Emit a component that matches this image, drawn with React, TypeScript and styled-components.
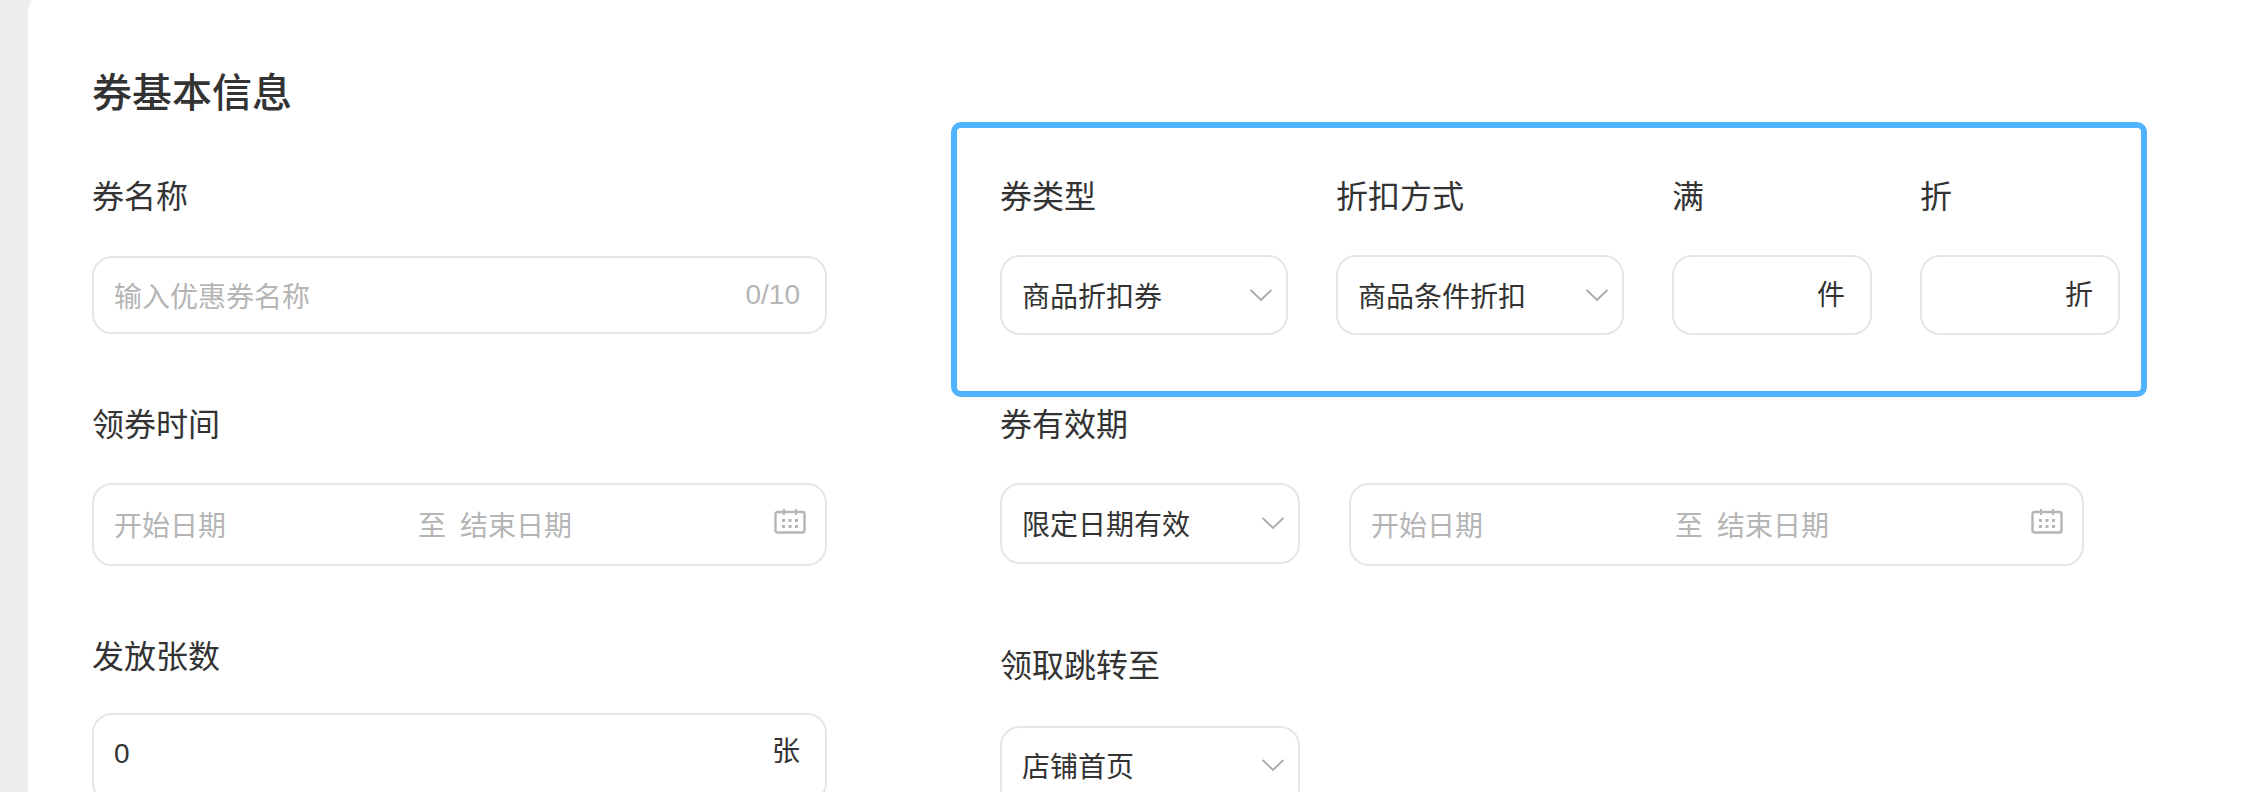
import styled, { createGlobalStyle } from 'styled-components';

const GlobalStyle = createGlobalStyle`
  html, body {
    margin: 0;
    padding: 0;
    height: 792px;
    overflow: hidden;
    background: #ededed;
  }
`;

const Page = styled.div`
  height: 792px;
  overflow: hidden;
  padding-left: 28px;
  font-family: "Liberation Sans", "Noto Sans CJK SC", sans-serif;
`;

const Card = styled.div`
  margin-top: -10px;
  height: 900px;
  padding: 73px 0 0 64px;
  box-sizing: border-box;
  background: #fff;
  border-radius: 24px 0 0 0;
`;

const Title = styled.h2`
  margin: 0;
  height: 56px;
  font-size: 40px;
  line-height: 60px;
  font-weight: 500;
  color: #333;
`;

const Columns = styled.div`
  display: flex;
  gap: 173px;
  align-items: flex-start;
`;

const LeftColumn = styled.div`
  width: 735px;
  padding-top: 57px;
`;

const RightColumn = styled.div`
  width: 1084px;
  padding-top: 3px;
`;

const Highlight = styled.div`
  display: grid;
  grid-template-columns: 288px 288px 200px 200px;
  column-gap: 48px;
  width: 1196px;
  height: 275px;
  margin-left: -49px;
  padding: 48px 0 0 43px;
  box-sizing: border-box;
  border: 6px solid #4fb3fd;
  border-radius: 10px;
`;

const Field = styled.div<{ $top?: number }>`
  margin-top: ${({ $top }) => $top ?? 0}px;
`;

const Label = styled.div<{ $gap: number }>`
  height: 40px;
  margin-bottom: ${({ $gap }) => $gap}px;
  font-size: 32px;
  line-height: 42px;
  color: #333;
`;

const Box = styled.div<{ $height: number; $width?: number; $right?: number; $raise?: number }>`
  display: flex;
  flex-shrink: 0;
  align-items: center;
  justify-content: space-between;
  width: ${({ $width }) => ($width ? `${$width}px` : '100%')};
  height: ${({ $height }) => $height}px;
  padding: 0 ${({ $right }) => $right ?? 14}px ${({ $raise }) => $raise ?? 0}px 20px;
  box-sizing: border-box;
  border: 2px solid #e6e6e6;
  border-radius: 20px;
  background: #fff;
  font-size: 28px;
  color: #333;
  white-space: nowrap;
`;

const Placeholder = styled.span`
  color: #b5b5b5;
`;

const RangeBox = styled(Box)`
  justify-content: flex-start;
`;

const RangeStart = styled(Placeholder)`
  width: 304px;
`;

const RangeEnd = styled(Placeholder)`
  margin-left: 14px;
  flex: 1;
`;

const Suffix = styled.span<{ $lift?: number }>`
  padding-bottom: ${({ $lift }) => $lift ?? 0}px;
  color: #333;
`;

const DateRow = styled.div`
  display: flex;
  gap: 49px;
  align-items: flex-start;
`;

const CalendarIcon = styled.svg`
  margin-bottom: 6px;
`;

const Chevron = () => (
  <svg width="22" height="12" viewBox="0 0 22 12" fill="none">
    <polyline points="0.6,1 11,11 21.4,1" stroke="#aaaaaa" strokeWidth="1.8" />
  </svg>
);

const Calendar = () => (
  <CalendarIcon width="32" height="26" viewBox="0 0 32 26" fill="none">
    <rect x="1.5" y="4" width="29" height="20.5" rx="2" stroke="#b5b5b5" strokeWidth="2.4" />
    <path d="M10 1v6M22 1v6" stroke="#b5b5b5" strokeWidth="2" />
    <g fill="#b5b5b5">
      <rect x="8" y="11" width="3" height="3" />
      <rect x="14.5" y="11" width="3" height="3" />
      <rect x="21" y="11" width="3" height="3" />
      <rect x="8" y="17" width="3" height="3" />
      <rect x="14.5" y="17" width="3" height="3" />
      <rect x="21" y="17" width="3" height="3" />
    </g>
  </CalendarIcon>
);

const DateRange = () => (
  <RangeBox $height={83} $width={735} $right={19} $raise={2}>
    <RangeStart>开始日期</RangeStart>
    <Placeholder>至</Placeholder>
    <RangeEnd>结束日期</RangeEnd>
    <Calendar />
  </RangeBox>
);

export default function App() {
  return (
    <Page>
      <GlobalStyle />
      <Card>
        <Title>券基本信息</Title>
        <Columns>
          <LeftColumn>
            <Field>
              <Label $gap={40}>券名称</Label>
              <Box $height={78} $right={25}>
                <Placeholder>输入优惠券名称</Placeholder>
                <Placeholder>0/10</Placeholder>
              </Box>
            </Field>
            <Field $top={70}>
              <Label $gap={39}>领券时间</Label>
              <DateRange />
            </Field>
            <Field $top={70}>
              <Label $gap={37}>发放张数</Label>
              <Box $height={90} $right={25} $raise={8}>
                <span>0</span>
                <Suffix $lift={10}>张</Suffix>
              </Box>
            </Field>
          </LeftColumn>
          <RightColumn>
            <Highlight>
              <Field>
                <Label $gap={39}>券类型</Label>
                <Box $height={80}>
                  商品折扣券
                  <Chevron />
                </Box>
              </Field>
              <Field>
                <Label $gap={39}>折扣方式</Label>
                <Box $height={80}>
                  商品条件折扣
                  <Chevron />
                </Box>
              </Field>
              <Field>
                <Label $gap={39}>满</Label>
                <Box $height={80} $right={25} $raise={5}>
                  <span />
                  <Suffix>件</Suffix>
                </Box>
              </Field>
              <Field>
                <Label $gap={39}>折</Label>
                <Box $height={80} $right={25} $raise={5}>
                  <span />
                  <Suffix>折</Suffix>
                </Box>
              </Field>
            </Highlight>
            <Field $top={7}>
              <Label $gap={39}>券有效期</Label>
              <DateRow>
                <Box $height={81} $width={300} $raise={2}>
                  限定日期有效
                  <Chevron />
                </Box>
                <DateRange />
              </DateRow>
            </Field>
            <Field $top={79}>
              <Label $gap={41}>领取跳转至</Label>
              <Box $height={81} $width={300} $raise={4}>
                店铺首页
                <Chevron />
              </Box>
            </Field>
          </RightColumn>
        </Columns>
      </Card>
    </Page>
  );
}
